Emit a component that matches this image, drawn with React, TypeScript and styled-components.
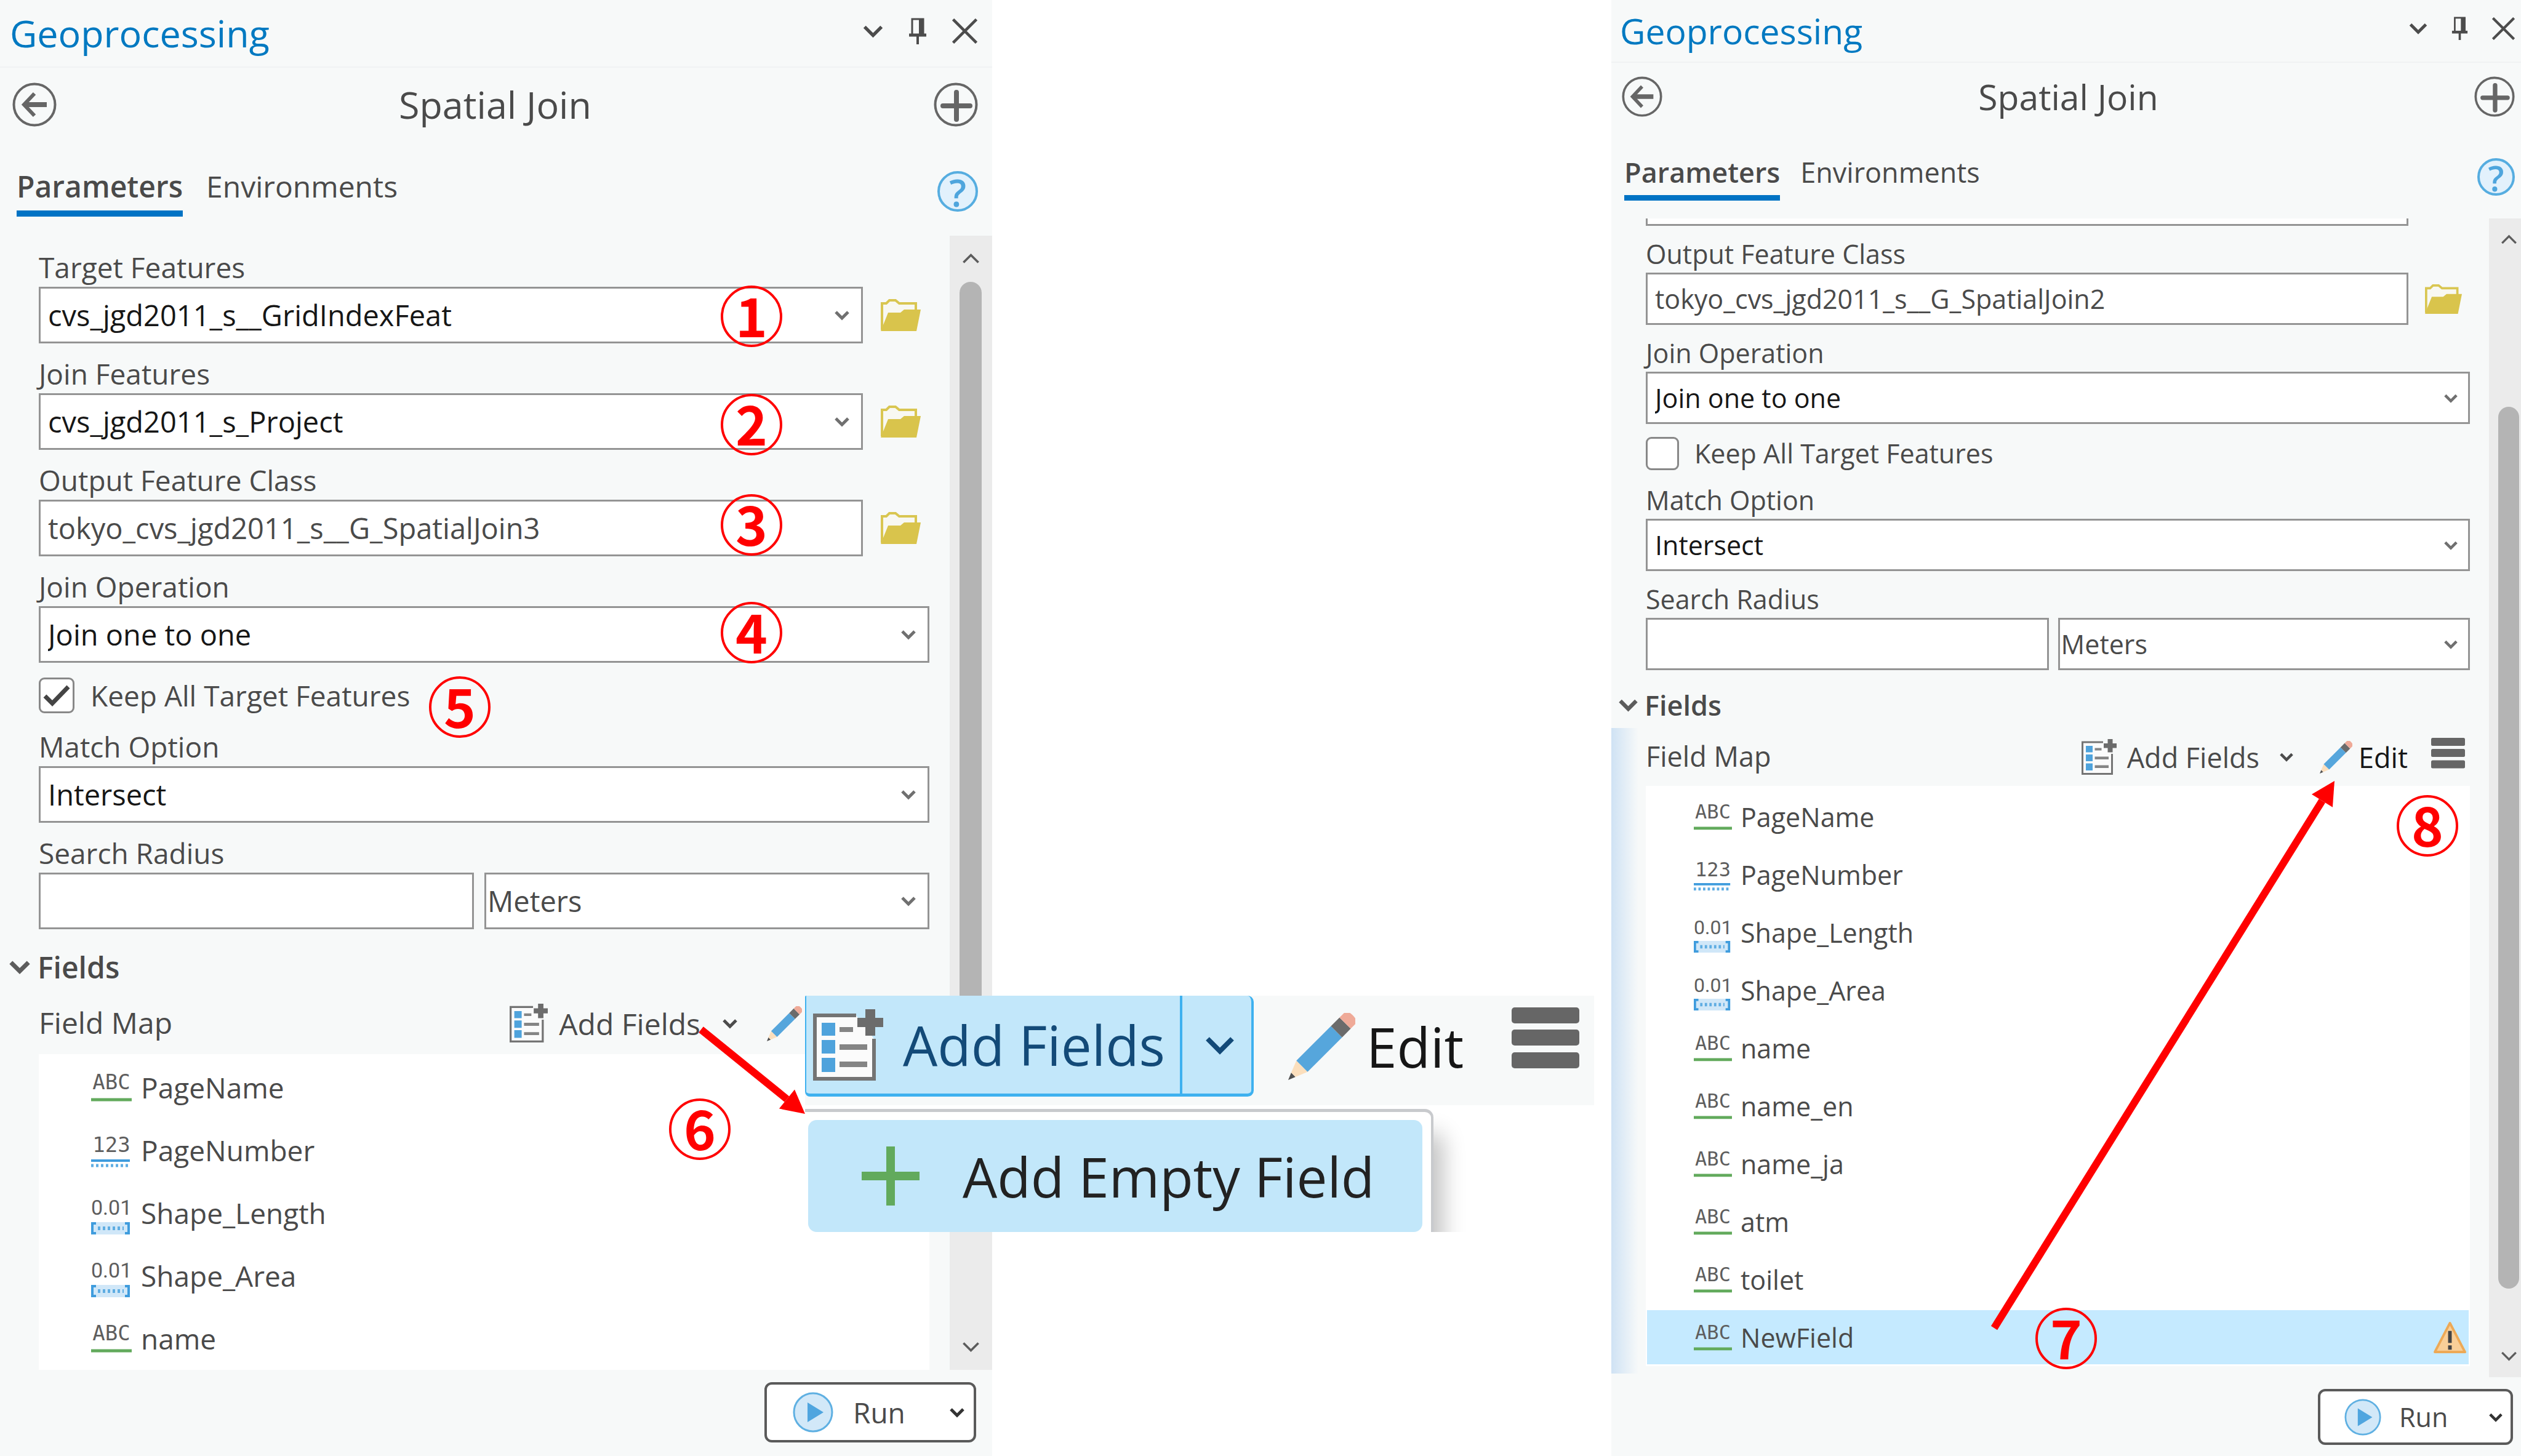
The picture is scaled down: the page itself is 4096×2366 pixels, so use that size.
import React from "react";
import styled, { createGlobalStyle, css, DefaultTheme, ThemeProvider } from "styled-components";

/* ---------- size sets for the two panes ---------- */

const large = {
  title: 61, tab: 48, value: 47, label: 46, badge: 34,
  headerH: 110, headerPad: "0 24px 8px 16px", headerGap: 41, chevW: 33, pinW: 30, closeW: 41,
  titleRowH: 120, titleRowPad: "0 23px 0 20px", round: 72,
  tabsPad: "40px 23px 31px 27px", tabLine: 66, tabBar: 10, tabGap: 38, help: 66,
  left: 63, right: 33, gap: 19, top: 21,
  labelLine: 60, boxH: 92, folderW: 65, folderPad: "0 14px 0 29px", pairGap: 17,
  arrowW: 24, arrowPad: 22, check: 58, checkRowH: 68, checkGap: 26,
  sectionH: 84, sectionPad: 15, sectionGap: 12, sectionChev: 34,
  toolH: 100, toolIcon: 62, toolGap: 18, toolChevGap: 36, pencil: 57, pencilGap: 48, editGap: 12, menuW: 60, menuGap: 42,
  rowH: 96, rowPad: 83, rowGap: 15, glyphW: 66, glyphPad: 9, glyphLine: 34, glyphGap: 7, markH: 20, warn: 57,
  scrollW: 69, scrollArrowH: 75, scrollArrow: 29, thumbPad: 16, thumbW: 36,
  runW: 344, runH: 98, runPad: "0 15px 0 42px", runGap: 32, play: 66, footPad: "20px 26px 20px 0",
};

const compact: typeof large = {
  title: 57, tab: 45, value: 43, label: 43, badge: 32,
  headerH: 102, headerPad: "0 10px 8px 14px", headerGap: 39, chevW: 30, pinW: 27, closeW: 37,
  titleRowH: 110, titleRowPad: "0 10px 0 17px", round: 66,
  tabsPad: "37px 10px 29px 21px", tabLine: 62, tabBar: 9, tabGap: 33, help: 61,
  left: 56, right: 31, gap: 18, top: 0,
  labelLine: 56, boxH: 85, folderW: 60, folderPad: "0 13px 0 27px", pairGap: 15,
  arrowW: 22, arrowPad: 20, check: 54, checkRowH: 60, checkGap: 25,
  sectionH: 76, sectionPad: 12, sectionGap: 11, sectionChev: 31,
  toolH: 94, toolIcon: 57, toolGap: 17, toolChevGap: 33, pencil: 53, pencilGap: 43, editGap: 10, menuW: 55, menuGap: 38,
  rowH: 88, rowPad: 76, rowGap: 14, glyphW: 62, glyphPad: 8, glyphLine: 32, glyphGap: 6, markH: 19, warn: 53,
  scrollW: 52, scrollArrowH: 69, scrollArrow: 27, thumbPad: 15, thumbW: 34,
  runW: 317, runH: 91, runPad: "0 13px 0 39px", runGap: 29, play: 60, footPad: "19px 13px 19px 0",
};

type Sizes = typeof large;
const s = (key: keyof Sizes) => ({ theme }: { theme: DefaultTheme }) => `${(theme as Sizes)[key]}px`;
const raw = (key: keyof Sizes) => ({ theme }: { theme: DefaultTheme }) => (theme as Sizes)[key];

const Global = createGlobalStyle`
  * { box-sizing: border-box; }
  body { margin: 0; background: #fff; }
  body, button, input, select {
    font-family: "Open Sans", "Noto Sans", "Liberation Sans", sans-serif;
    color: #4a4a4a;
  }
  svg { display: block; flex: none; }
`;

/* ---------- icons ---------- */

const Chevron = ({ w, weight = 3, color = "#5c5c5c", up = false }: { w: number; weight?: number; color?: string; up?: boolean }) => (
  <svg width={w} height={w} viewBox="0 0 24 24" fill="none" stroke={color} strokeWidth={weight}>
    <path d={up ? "M2 17 L12 7 L22 17" : "M2 7 L12 17 L22 7"} />
  </svg>
);

const PinIcon = ({ w }: { w: number }) => (
  <svg width={w} height={(w * 43) / 30} viewBox="0 0 30 43" fill="none" stroke="#4c4c4c" strokeWidth="3">
    <path d="M6 28 V2 H24 V28" />
    <path d="M21 2 V28" strokeWidth="8" />
    <path d="M1 28 H29" strokeWidth="5" />
    <path d="M15 29 V43" strokeWidth="4" />
  </svg>
);

const CloseIcon = ({ w }: { w: number }) => (
  <svg width={w} height={w} viewBox="0 0 40 40" stroke="#4c4c4c" strokeWidth="4.500">
    <path d="M1.500 1.500 L38.500 38.500 M38.500 1.500 L1.500 38.500" />
  </svg>
);

const BackIcon = ({ w }: { w: number }) => (
  <svg width={w} height={w} viewBox="0 0 72 72" fill="none" stroke="#666" strokeWidth="4">
    <circle cx="36" cy="36" r="33.500" />
    <path d="M56 36 H20" strokeWidth="8" />
    <path d="M36 18 L19 36 L36 54" strokeWidth="6" />
  </svg>
);

const PlusCircleIcon = ({ w }: { w: number }) => (
  <svg width={w} height={w} viewBox="0 0 72 72" fill="none" stroke="#666" strokeWidth="4">
    <circle cx="36" cy="36" r="33.500" />
    <path d="M37 16 V60 M15 38 H59" strokeWidth="8" strokeLinecap="round" />
  </svg>
);

const FolderIcon = ({ w }: { w: number }) => (
  <svg width={w} height={(w * 52) / 65} viewBox="0 0 65 52">
    <path d="M2 50 V7 H9 L14 2 H24 L30 7 H57 V19" fill="#f8f8f2" stroke="#d9c651" strokeWidth="4" />
    <path d="M0 52 L12 22 H32 L38 17 H65 L58 52 Z" fill="#d9c44c" />
  </svg>
);

const TickIcon = ({ w }: { w: number }) => (
  <svg width={w} height={w} viewBox="0 0 58 58" fill="none" stroke="#444" strokeWidth="7">
    <path d="M10 30 L22 42 L48 15" />
  </svg>
);

const AddFieldsIcon = ({ w }: { w: number }) => (
  <svg width={w} height={(w * 116) / 114} viewBox="0 0 114 116">
    <path d="M70 10 H3 V113 H99 V48" fill="#fbfbfb" stroke="#747474" strokeWidth="6" />
    <path d="M14 22 h22 v21 h-22 z M14 50 h22 v22 h-22 z M14 79 h22 v23 h-22 z" fill="#4fa3dc" />
    <path d="M43 29 h22 v8 h-22 z M43 57 h45 v9 h-45 z M43 85 h45 v9 h-45 z" fill="#858585" />
    <path d="M85 0 h16 v14 h13 v15 h-13 v14 h-16 v-14 h-13 v-15 h13 z" fill="#6c6c6c" />
  </svg>
);

const PencilIcon = ({ w }: { w: number }) => (
  <svg width={w} height={w} viewBox="0 0 110 110">
    <g transform="translate(0 110) rotate(-45)">
      <path d="M0 0 L12 -5 V5 Z" fill="#505050" />
      <path d="M12 -5 L32 -13 V13 L12 5 Z" fill="#fbdfbd" />
      <path d="M32 -13 H112 V13 H32 Z" fill="#56a6dc" />
      <path d="M112 -13 H132 V13 H112 Z" fill="#6b6b6b" />
      <path d="M132 -13 H142 Q150 -13 150 0 Q150 13 142 13 H132 Z" fill="#efaa98" />
    </g>
  </svg>
);

const MenuIcon = ({ w }: { w: number }) => (
  <svg width={w} height={(w * 126) / 110} viewBox="0 0 110 126" fill="#666">
    <rect x="0" y="0" width="110" height="26" rx="5" />
    <rect x="0" y="36" width="110" height="26" rx="5" />
    <rect x="0" y="73" width="110" height="26" rx="5" />
  </svg>
);

const PlayIcon = ({ w }: { w: number }) => (
  <svg width={w} height={w} viewBox="0 0 66 66">
    <circle cx="33" cy="33" r="31" fill="#d2e8f8" stroke="#5fb0e2" strokeWidth="3" />
    <path d="M24 17 L50 33 L24 49 Z" fill="#4fa5df" />
  </svg>
);

const WarningIcon = ({ w }: { w: number }) => (
  <svg width={w} height={w} viewBox="0 0 54 54">
    <path d="M27 3 L52 51 H2 Z" fill="#f9cf98" stroke="#eda956" strokeWidth="4" strokeLinejoin="round" />
    <path d="M27 16 V36 M27 40 V47" stroke="#444" strokeWidth="6" />
  </svg>
);

const GreenPlusIcon = () => (
  <svg width="94" height="96" viewBox="0 0 94 96" stroke="#62aa5c" strokeWidth="14">
    <path d="M47 0 V96 M0 48 H94" />
  </svg>
);

type Kind = "text" | "int" | "double";

const Mark = ({ kind, w, h }: { kind: Kind; w: number; h: number }) => (
  <svg width={w} height={h} viewBox="0 0 66 20" preserveAspectRatio="none" fill="none">
    {kind === "text" && <path d="M0 5 H66" stroke="#62aa5c" strokeWidth="5" />}
    {kind === "int" && (
      <>
        <path d="M0 2 H63" stroke="#3f9cdd" strokeWidth="4" />
        <path d="M0 10 H63" stroke="#5fade2" strokeWidth="5" strokeDasharray="4 4" />
      </>
    )}
    {kind === "double" && (
      <>
        <rect x="1" y="0" width="61" height="20" fill="#d0e7f8" />
        <path d="M8 2 H2 V18 H8 M55 2 H61 V18 H55" stroke="#3f9cdd" strokeWidth="4" />
        <path d="M11 10 H53" stroke="#5fade2" strokeWidth="6" strokeDasharray="4 4" />
      </>
    )}
  </svg>
);

/* ---------- page and panel frame ---------- */

const Page = styled.main`
  position: relative;
  display: grid;
  grid-template-columns: minmax(0, 1612fr) minmax(0, 1006fr) minmax(0, 1478fr);
  min-height: 100vh;
  overflow: hidden;
`;

const Panel = styled.section<{ $column: number }>`
  grid-column: ${(p) => p.$column};
  display: flex;
  flex-direction: column;
  min-width: 0;
  background: #f7f9f9;
`;

const IconButton = styled.button`
  display: flex;
  padding: 0;
  border: 0;
  background: none;
`;

const Header = styled.header`
  display: flex;
  align-items: center;
  justify-content: space-between;
  height: ${s("headerH")};
  padding: ${raw("headerPad")};
  border-bottom: 2px solid #f0f2f3;
`;

const PaneTitle = styled.h1`
  margin: 8px 0 0;
  font-size: ${s("title")};
  line-height: 80px;
  font-weight: 400;
  color: #0079c1;
`;

const HeaderActions = styled.div`
  display: flex;
  align-items: center;
  gap: ${s("headerGap")};
`;

const TitleRow = styled.div`
  display: flex;
  align-items: center;
  justify-content: space-between;
  height: ${s("titleRowH")};
  padding: ${raw("titleRowPad")};
`;

const ToolTitle = styled.h2`
  margin: 0;
  font-size: ${s("title")};
  line-height: 80px;
  font-weight: 400;
`;

const TabRow = styled.div`
  display: flex;
  align-items: center;
  justify-content: space-between;
  padding: ${raw("tabsPad")};
`;

const Tabs = styled.div`
  display: flex;
  gap: ${s("tabGap")};
`;

const Tab = styled.button<{ $active?: boolean }>`
  padding: 0 0 6px;
  border: 0;
  border-bottom: ${s("tabBar")} solid ${(p) => (p.$active ? "#0073c4" : "transparent")};
  background: none;
  font-size: ${s("tab")};
  line-height: ${s("tabLine")};
  font-weight: ${(p) => (p.$active ? 600 : 400)};
`;

const HelpButton = styled.button`
  display: grid;
  place-items: center;
  width: ${s("help")};
  height: ${s("help")};
  padding: 0;
  border: 4px solid #56ade0;
  border-radius: 50%;
  background: #e2f1fc;
  color: #4ea5dd;
  font-size: ${s("title")};
  font-weight: 600;
  line-height: 1;
`;

const Body = styled.div`
  display: flex;
`;

const Content = styled.div`
  flex: 1;
  min-width: 0;
`;

/* ---------- scroll bar ---------- */

const ScrollTrack = styled.div`
  display: flex;
  flex-direction: column;
  width: ${s("scrollW")};
  background: #ebebeb;
`;

const ScrollArrow = styled.button`
  display: flex;
  align-items: center;
  justify-content: center;
  width: ${s("thumbW")};
  height: ${s("scrollArrowH")};
  margin-left: ${s("thumbPad")};
  padding: 0;
  border: 0;
  background: none;
`;

const ScrollPart = styled.div<{ $grow: number; $thumb?: boolean }>`
  flex: ${(p) => p.$grow} 1 0;
  width: ${s("thumbW")};
  margin-left: ${s("thumbPad")};
  border-radius: 18px;
  background: ${(p) => (p.$thumb ? "#b4b4b4" : "transparent")};
`;

/* ---------- form ---------- */

const Form = styled.form`
  display: flex;
  flex-direction: column;
  gap: ${s("gap")};
  padding: ${s("top")} ${s("right")} 0 ${s("left")};
`;

const Field = styled.div`
  display: flex;
  flex-direction: column;
  gap: 2px;
`;

const Label = styled.label`
  font-size: ${s("label")};
  line-height: ${s("labelLine")};
`;

const FieldRow = styled.div`
  display: flex;
  align-items: center;
`;

const Pair = styled.div`
  display: grid;
  grid-template-columns: 707fr 723fr;
  gap: ${s("pairGap")};
`;

const boxed = css`
  width: 100%;
  height: ${s("boxH")};
  border: 3px solid #949494;
  border-radius: 0;
  background: #fff;
  font-size: ${s("value")};
`;

const TextBox = styled.input`
  ${boxed}
  padding: 0 12px;
`;

const SelectWrap = styled.div`
  display: grid;
  flex: 1;
  align-items: center;
  > * { grid-area: 1 / 1; }
`;

const SelectBox = styled.select<{ $muted?: boolean }>`
  ${boxed}
  appearance: none;
  padding: 0 ${(p) => (p.$muted ? 2 : 12)}px;
  color: ${(p) => (p.$muted ? "#4a4a4a" : "#161616")};
`;

const SelectArrow = styled.span`
  justify-self: end;
  margin-right: ${s("arrowPad")};
  pointer-events: none;
`;

const FolderButton = styled(IconButton)`
  padding: ${raw("folderPad")};
`;

const ClippedBox = styled.div`
  height: 12px;
  margin-right: 100px;
  border: 3px solid #949494;
  border-top: 0;
  background: #fff;
`;

const CheckRow = styled.div`
  display: flex;
  align-items: center;
  gap: ${s("checkGap")};
  height: ${s("checkRowH")};
`;

const CheckWrap = styled.span`
  display: grid;
  > * { grid-area: 1 / 1; }
  > svg { pointer-events: none; }
`;

const CheckBox = styled.input`
  appearance: none;
  width: ${s("check")};
  height: ${s("check")};
  margin: 0;
  border: 3px solid #888;
  border-radius: 9px;
  background: #fff;
`;

const CheckLabel = styled.label`
  font-size: ${s("label")};
  line-height: ${s("labelLine")};
`;

const SectionButton = styled.button`
  display: flex;
  align-items: center;
  gap: ${s("sectionGap")};
  height: ${s("sectionH")};
  margin-top: ${s("gap")};
  padding: 0 0 0 ${s("sectionPad")};
  border: 0;
  background: none;
  font-size: ${s("tab")};
  font-weight: 600;
`;

/* ---------- field map ---------- */

const FieldMap = styled.div<{ $edited?: boolean }>`
  padding: 0 ${s("right")} ${(p) => (p.$edited ? 12 : 0)}px ${s("left")};
  margin-bottom: ${(p) => (p.$edited ? 6 : 0)}px;
  background: ${(p) => (p.$edited ? "linear-gradient(to right, #cfe2f4, rgba(247, 249, 249, 0) 44px)" : "none")};
`;

const Toolbar = styled.div<{ $tail: number }>`
  display: flex;
  align-items: center;
  height: ${s("toolH")};
  padding-right: ${(p) => p.$tail}px;
`;

const ToolbarLabel = styled.span`
  flex: 1;
  padding-bottom: 4px;
  font-size: ${s("tab")};
`;

const ToolButton = styled.button<{ $dark?: boolean; $gap: "toolGap" | "editGap" }>`
  display: flex;
  align-items: center;
  gap: ${(p) => s(p.$gap)(p)};
  padding: 0;
  border: 0;
  background: none;
  font-size: ${s("tab")};
  color: ${(p) => (p.$dark ? "#161616" : "#4a4a4a")};
`;

const DropButton = styled(IconButton)`
  margin: 0 ${s("pencilGap")} 0 ${s("toolChevGap")};
`;

const MenuButton = styled(IconButton)`
  margin-left: ${s("menuGap")};
`;

const List = styled.ul`
  display: flex;
  flex-direction: column;
  gap: 6px;
  margin: 0;
  padding: 6px 2px 3px;
  list-style: none;
  background: #fff;
`;

const Row = styled.li<{ $selected?: boolean }>`
  display: flex;
  align-items: center;
  gap: ${s("rowGap")};
  height: ${s("rowH")};
  padding-left: ${s("rowPad")};
  background: ${(p) => (p.$selected ? "#c5eaff" : "none")};
  font-size: ${s("label")};
  > svg { margin-left: auto; margin-right: 4px; }
`;

const TypeGlyph = styled.span`
  display: flex;
  flex-direction: column;
  gap: ${s("glyphGap")};
  width: ${s("glyphW")};
  padding-top: ${s("glyphPad")};
`;

const TypeText = styled.span<{ $narrow: boolean }>`
  font-family: ${(p) => (p.$narrow ? "Roboto" : "\"DejaVu Sans Mono\"")}, sans-serif;
  font-size: ${s("badge")};
  line-height: ${s("glyphLine")};
  text-align: center;
  white-space: nowrap;
  color: #5e5e5e;
`;

const Footer = styled.footer`
  display: flex;
  justify-content: flex-end;
  padding: ${raw("footPad")};
`;

const RunButton = styled.button`
  display: flex;
  align-items: center;
  gap: ${s("runGap")};
  width: ${s("runW")};
  height: ${s("runH")};
  padding: ${raw("runPad")};
  border: 4px solid #5a5a5a;
  border-radius: 12px;
  background: #fff;
  font-size: ${s("label")};
  > :last-child { margin-left: auto; }
`;

/* ---------- enlarged toolbar call-out ---------- */

const Callout = styled.div`
  position: absolute;
  left: 1308px;
  top: 1618px;
  width: 1282px;
  overflow: hidden;
  background: #fff;
`;

const BigToolbar = styled.div`
  display: flex;
  height: 178px;
  padding-bottom: 14px;
  background: #f7f9f9;
`;

const BigSplit = styled.div`
  display: flex;
  margin-right: 56px;
  border: solid #3eb1ef;
  border-width: 0 4px 5px 2px;
  border-radius: 2px 10px 10px 8px;
  background: #c2e7fa;
`;

const BigButton = styled.button<{ $blue?: boolean }>`
  display: flex;
  align-items: center;
  gap: ${(p) => (p.$blue ? 32 : 18)}px;
  padding: ${(p) => (p.$blue ? "0 24px 0 11px" : "0")};
  border: 0;
  background: none;
  font-size: 89px;
  color: ${(p) => (p.$blue ? "#134a78" : "#161616")};
`;

const BigDrop = styled(IconButton)`
  align-items: center;
  padding: 0 27px 0 37px;
  border-left: 4px solid #3eb1ef;
`;

const BigMenuButton = styled(IconButton)`
  align-items: center;
  margin-left: 78px;
`;

const BigMenu = styled.div`
  width: 1021px;
  margin-top: 6px;
  padding: 13px 14px 0 5px;
  border: solid #c8cacd;
  border-width: 5px 4px 0 0;
  border-radius: 0 14px 0 0;
  background: #fff;
  box-shadow: 16px 40px 36px rgba(0, 0, 0, 0.24);
`;

const BigMenuItem = styled.button`
  display: flex;
  align-items: center;
  gap: 70px;
  width: 100%;
  height: 182px;
  padding: 0 0 0 87px;
  border: 0;
  border-radius: 14px;
  background: #c2e7fa;
  font-size: 89px;
  color: #222;
`;

/* ---------- step markers and arrows ---------- */

const Marker = styled.span<{ $x: number; $y: number }>`
  position: absolute;
  left: ${(p) => p.$x - 50}px;
  top: ${(p) => p.$y - 50}px;
  width: 100px;
  height: 100px;
  border: 4px solid #f00;
  border-radius: 50%;
  text-align: center;
  font-family: "Noto Sans CJK JP", sans-serif;
  font-size: 88px;
  line-height: 84px;
  font-weight: 700;
  color: #f00;
  pointer-events: none;
`;

const ArrowLayer = styled.svg`
  position: absolute;
  left: 0;
  top: 0;
  pointer-events: none;
`;

const markers = [
  { step: 1, x: 1221, y: 514 },
  { step: 2, x: 1221, y: 690 },
  { step: 3, x: 1221, y: 853 },
  { step: 4, x: 1221, y: 1028 },
  { step: 5, x: 747, y: 1149 },
  { step: 6, x: 1137, y: 1835 },
  { step: 7, x: 3357, y: 2175 },
  { step: 8, x: 3944, y: 1342 },
];

const Arrow = ({ x1, y1, x2, y2 }: { x1: number; y1: number; x2: number; y2: number }) => {
  const len = Math.hypot(x2 - x1, y2 - y1);
  const ux = (x2 - x1) / len;
  const uy = (y2 - y1) / len;
  const bx = x2 - ux * 38;
  const by = y2 - uy * 38;
  return (
    <g fill="#f00" stroke="#f00">
      <path d={`M${x1} ${y1} L${bx} ${by}`} strokeWidth="12" />
      <path d={`M${x2} ${y2} L${bx - uy * 20} ${by + ux * 20} L${bx + uy * 20} ${by - ux * 20} Z`} stroke="none" />
    </g>
  );
};

/* ---------- composed parts ---------- */

const Select = ({ id, value, z, muted, label }: { id: string; value: string; z: Sizes; muted?: boolean; label?: string }) => (
  <SelectWrap>
    <SelectBox id={id} $muted={muted} aria-label={label} defaultValue={value}>
      <option>{value}</option>
    </SelectBox>
    <SelectArrow><Chevron w={z.arrowW} weight={5} color="#707070" /></SelectArrow>
  </SelectWrap>
);

const Browse = ({ z }: { z: Sizes }) => (
  <FolderButton type="button" aria-label="Browse"><FolderIcon w={z.folderW} /></FolderButton>
);

type PaneProps = {
  id: string;
  column: number;
  z: Sizes;
  inputs: { label: string; value: string }[];
  output: string;
  keepAll: boolean;
  fields: { name: string; kind: Kind; warn?: boolean }[];
  full?: boolean;
  scroll: [number, number, number];
};

const glyphText: Record<Kind, string> = { text: "ABC", int: "123", double: "0.01" };

const GeoPane = ({ id, column, z, inputs, output, keepAll, fields, full, scroll }: PaneProps) => (
  <ThemeProvider theme={z}>
    <Panel $column={column}>
      <Header>
        <PaneTitle>Geoprocessing</PaneTitle>
        <HeaderActions>
          <IconButton aria-label="Pane options"><Chevron w={z.chevW} weight={4} color="#4c4c4c" /></IconButton>
          <IconButton aria-label="Auto hide"><PinIcon w={z.pinW} /></IconButton>
          <IconButton aria-label="Close"><CloseIcon w={z.closeW} /></IconButton>
        </HeaderActions>
      </Header>
      <TitleRow>
        <IconButton aria-label="Back"><BackIcon w={z.round} /></IconButton>
        <ToolTitle>Spatial Join</ToolTitle>
        <IconButton aria-label="Add"><PlusCircleIcon w={z.round} /></IconButton>
      </TitleRow>
      <TabRow>
        <Tabs role="tablist">
          <Tab role="tab" aria-selected $active>Parameters</Tab>
          <Tab role="tab" aria-selected={false}>Environments</Tab>
        </Tabs>
        <HelpButton aria-label="Help">?</HelpButton>
      </TabRow>
      <Body>
        <Content>
          <Form>
            {full && <ClippedBox />}
            {inputs.map((f, i) => (
              <Field key={f.label}>
                <Label htmlFor={`${id}-in${i}`}>{f.label}</Label>
                <FieldRow>
                  <Select id={`${id}-in${i}`} value={f.value} z={z} />
                  <Browse z={z} />
                </FieldRow>
              </Field>
            ))}
            <Field>
              <Label htmlFor={`${id}-out`}>Output Feature Class</Label>
              <FieldRow>
                <TextBox id={`${id}-out`} defaultValue={output} />
                <Browse z={z} />
              </FieldRow>
            </Field>
            <Field>
              <Label htmlFor={`${id}-op`}>Join Operation</Label>
              <Select id={`${id}-op`} value="Join one to one" z={z} />
            </Field>
            <CheckRow>
              <CheckWrap>
                <CheckBox id={`${id}-keep`} type="checkbox" defaultChecked={keepAll} />
                {keepAll && <TickIcon w={z.check} />}
              </CheckWrap>
              <CheckLabel htmlFor={`${id}-keep`}>Keep All Target Features</CheckLabel>
            </CheckRow>
            <Field>
              <Label htmlFor={`${id}-match`}>Match Option</Label>
              <Select id={`${id}-match`} value="Intersect" z={z} />
            </Field>
            <Field>
              <Label htmlFor={`${id}-radius`}>Search Radius</Label>
              <Pair>
                <TextBox id={`${id}-radius`} />
                <Select id={`${id}-unit`} value="Meters" label="Search radius unit" muted z={z} />
              </Pair>
            </Field>
          </Form>
          <SectionButton aria-expanded><Chevron w={z.sectionChev} weight={5} />Fields</SectionButton>
          <FieldMap $edited={full}>
            <Toolbar $tail={full ? 8 : 207}>
              <ToolbarLabel>Field Map</ToolbarLabel>
              <ToolButton $gap="toolGap"><AddFieldsIcon w={z.toolIcon} />Add Fields</ToolButton>
              <DropButton aria-label="Add Fields options"><Chevron w={z.arrowW} weight={5} color="#4c4c4c" /></DropButton>
              {full ? (
                <>
                  <ToolButton $gap="editGap" $dark><PencilIcon w={z.pencil} />Edit</ToolButton>
                  <MenuButton aria-label="Menu"><MenuIcon w={z.menuW} /></MenuButton>
                </>
              ) : (
                <IconButton aria-label="Edit"><PencilIcon w={z.pencil} /></IconButton>
              )}
            </Toolbar>
            <List>
              {fields.map((f) => (
                <Row key={f.name} $selected={f.warn}>
                  <TypeGlyph>
                    <TypeText $narrow={f.kind === "double"}>{glyphText[f.kind]}</TypeText>
                    <Mark kind={f.kind} w={z.glyphW} h={z.markH} />
                  </TypeGlyph>
                  <span>{f.name}</span>
                  {f.warn && <WarningIcon w={z.warn} />}
                </Row>
              ))}
            </List>
          </FieldMap>
        </Content>
        <ScrollTrack>
          <ScrollArrow aria-label="Scroll up"><Chevron up w={z.scrollArrow} weight={3} /></ScrollArrow>
          <ScrollPart $grow={scroll[0]} />
          <ScrollPart $grow={scroll[1]} $thumb />
          <ScrollPart $grow={scroll[2]} />
          <ScrollArrow aria-label="Scroll down"><Chevron w={z.scrollArrow} weight={3} /></ScrollArrow>
        </ScrollTrack>
      </Body>
      <Footer>
        <RunButton><PlayIcon w={z.play} /><span>Run</span><Chevron w={z.arrowW} weight={5} color="#333" /></RunButton>
      </Footer>
    </Panel>
  </ThemeProvider>
);

const baseFields: PaneProps["fields"] = [
  { name: "PageName", kind: "text" },
  { name: "PageNumber", kind: "int" },
  { name: "Shape_Length", kind: "double" },
  { name: "Shape_Area", kind: "double" },
  { name: "name", kind: "text" },
];

const moreFields: PaneProps["fields"] = [
  { name: "name_en", kind: "text" },
  { name: "name_ja", kind: "text" },
  { name: "atm", kind: "text" },
  { name: "toilet", kind: "text" },
  { name: "NewField", kind: "text", warn: true },
];

export default function App() {
  return (
    <>
      <Global />
      <Page>
        <GeoPane
          id="first"
          column={1}
          z={large}
          inputs={[
            { label: "Target Features", value: "cvs_jgd2011_s__GridIndexFeat" },
            { label: "Join Features", value: "cvs_jgd2011_s_Project" },
          ]}
          output="tokyo_cvs_jgd2011_s__G_SpatialJoin3"
          keepAll
          fields={baseFields}
          scroll={[0, 1480, 212]}
        />
        <GeoPane
          id="second"
          column={3}
          z={compact}
          inputs={[]}
          output="tokyo_cvs_jgd2011_s__G_SpatialJoin2"
          keepAll={false}
          fields={[...baseFields, ...moreFields]}
          full
          scroll={[237, 1433, 75]}
        />
        <Callout>
          <BigToolbar>
            <BigSplit>
              <BigButton $blue><AddFieldsIcon w={114} />Add Fields</BigButton>
              <BigDrop aria-label="Add Fields options"><Chevron w={48} weight={4} color="#134a78" /></BigDrop>
            </BigSplit>
            <BigButton><PencilIcon w={109} />Edit</BigButton>
            <BigMenuButton aria-label="Menu"><MenuIcon w={110} /></BigMenuButton>
          </BigToolbar>
          <BigMenu>
            <BigMenuItem><GreenPlusIcon />Add Empty Field</BigMenuItem>
          </BigMenu>
        </Callout>
        <ArrowLayer width="4096" height="2366" viewBox="0 0 4096 2366">
          <Arrow x1={1139} y1={1673} x2={1308} y2={1810} />
          <Arrow x1={3240} y1={2158} x2={3793} y2={1269} />
        </ArrowLayer>
        {markers.map((m) => (
          <Marker key={m.step} $x={m.x} $y={m.y}>{m.step}</Marker>
        ))}
      </Page>
    </>
  );
}
